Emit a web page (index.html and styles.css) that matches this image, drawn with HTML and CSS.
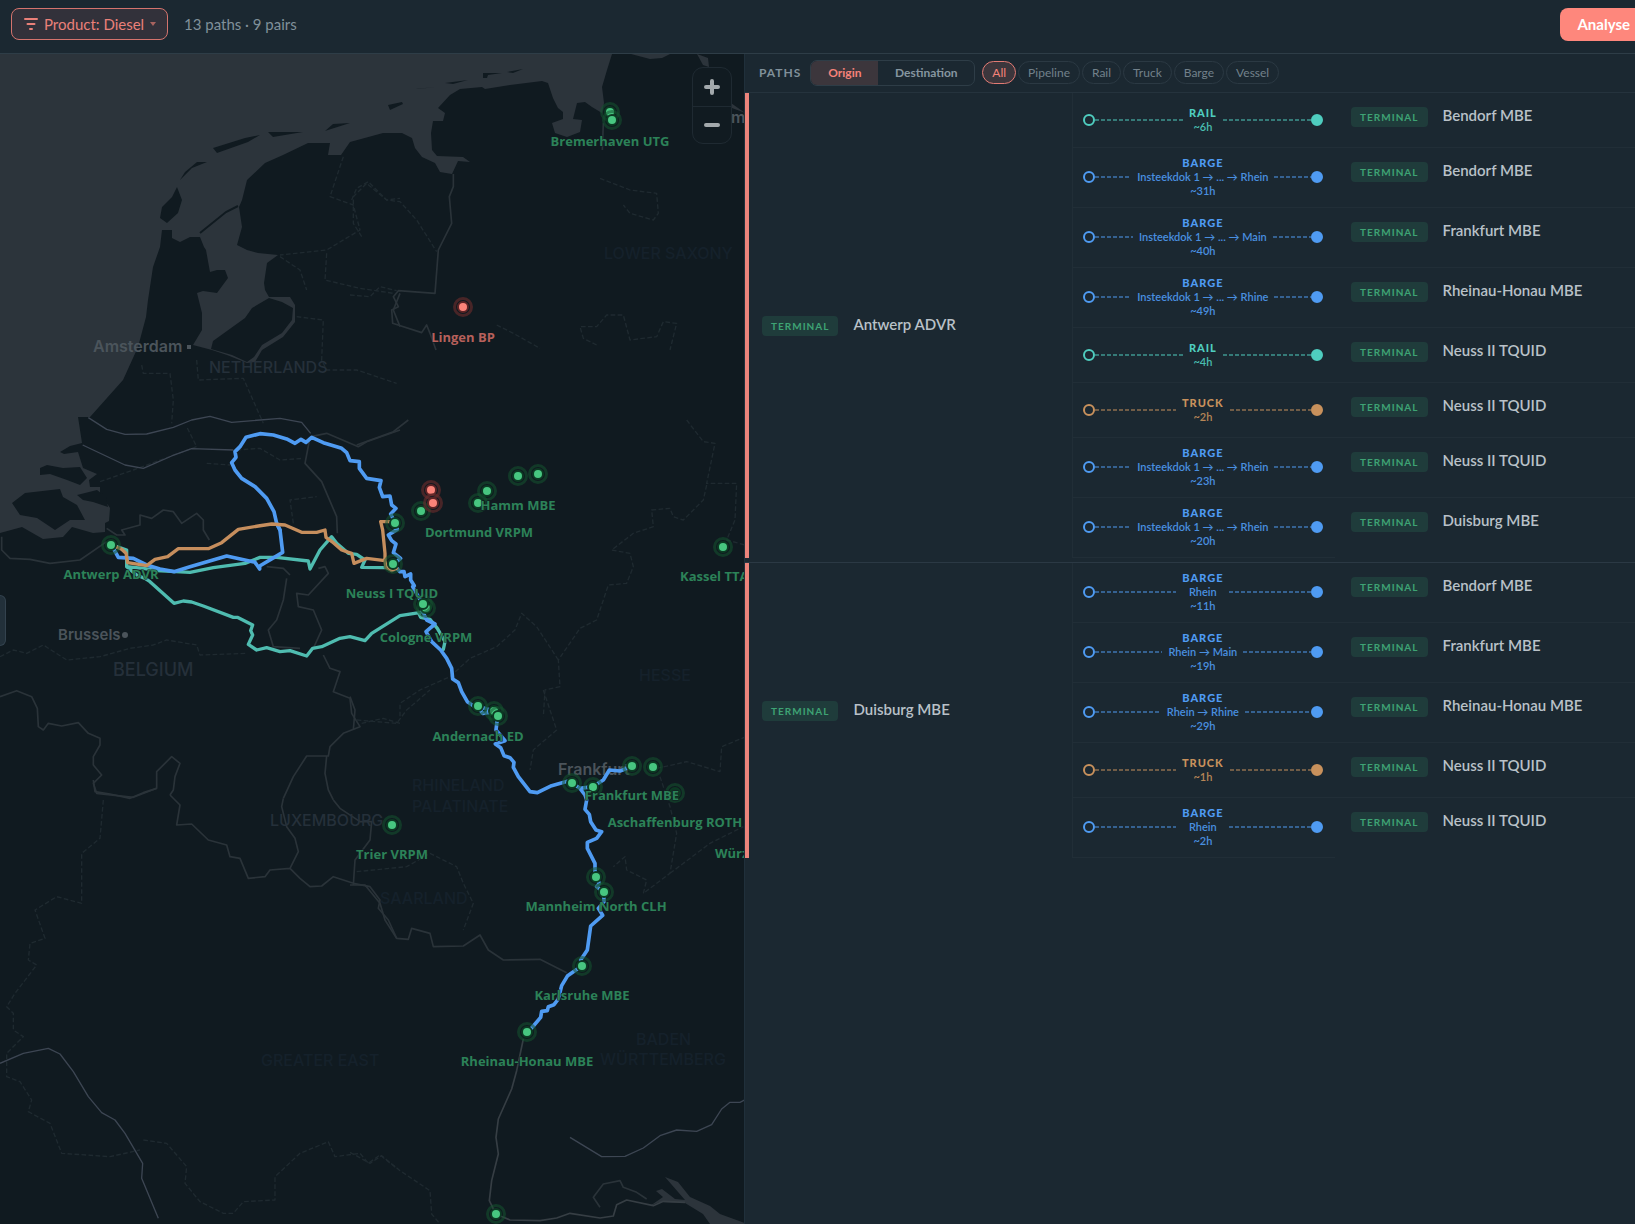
FILE: index.html
```html
<!DOCTYPE html>
<html lang="en">
<head>
<meta charset="utf-8">
<title>Paths</title>
<link rel="stylesheet" href="styles.css">
</head>
<body>
<header class="topbar">
  <button class="filter" type="button">
    <svg width="14" height="14" viewBox="0 0 14 14" fill="none" stroke="currentColor" stroke-width="2" stroke-linecap="round"><path d="M1 2h12M3.500 7h7M6 12h2"/></svg>
    <span>Product: Diesel</span>
    <svg class="caret" width="6" height="4" viewBox="0 0 6 4" fill="currentColor"><path d="M0 0h6L3 4z"/></svg>
  </button>
  <span class="summary">13 paths · 9 pairs</span>
  <button class="analyse" type="button">Analyse</button>
</header>
<main class="workspace">
  <section class="map" aria-label="Map">
    <svg class="map-canvas" viewBox="0 54 745 1170" preserveAspectRatio="xMinYMin slice">
      <g class="water">
        <path d="M0 54H612L607 70 602 87 604 103 602 113 592 107 585 102 577 103 573 119 582 120 580 132 567 137 555 133 552 123 563 119 563 112 558 108 553 98 548 83 542 81 510 85 485 89 482 87 460 89 450 95 438 108 445 113 443 121 433 121 431 133 432 150 437 156 463 157 470 162 458 161 452 174 440 172 435 163 422 157 415 148 412 138 402 133 383 133 350 142 341 155 328 155 330 143 308 143 283 155 265 163 247 180 242 200 239 207 242 227 237 245 247 250 258 253 278 255 267 263 264 283 265 290 269 297 290 297 295 305 295 322 283 337 262 350 255 362 247 363 227 355 212 350 193 345 202 330 202 313 197 293 203 291 217 293 228 278 225 270 217 270 210 272 206 250 204 247 200 237 190 237 180 242 172 238 172 230 162 230 160 247 153 267 148 300 146 317 138 347 123 380 90 417 78 417 82 443 70 446 60 452 64 454 78 452 83 468 97 474 89 480 90 487 100 487 100 493 110 508 109 521 105 523 105 532 93 533 72 527 63 537 43 539 22 527 0 533Z"/>
        <path d="M631 54 650 59 662 58 670 54ZM697 54 708 58 709 67 703 65ZM731 103 745 113 732 108Z"/>
        <path d="M665 1177 678 1182 690 1197 710 1206 720 1214 745 1223V1224H710L703 1214 685 1203 660 1202 650 1206 663 1197 656 1191 662 1189 675 1199 685 1200Z"/>
      </g>
      <g class="land">
        <path d="M269 298 282 302 293 308 292 320 282 333 262 345 254 357 247 362 232 355 211 349 213 341 245 318 252 308Z"/>
        <path d="M177 187 182 200 178 213 167 223 160 218 162 207 172 197ZM180 180 192 168 207 162 197 162 185 172ZM213 148 245 138 260 135 248 142 217 153ZM268 132 303 132 273 137ZM325 131 333 124 350 123 328 130Z"/>
        <path d="M388 105 402 102 403 104 390 110ZM416 89 435 87 418 89ZM445 83 468 80 453 84ZM483 73 502 73 488 75 487 78 483 78ZM507 72 523 69 513 73Z"/>
        <path d="M40 468 47 465 63 468 80 467 87 478 80 485 67 480 50 474 40 475ZM12 503 25 493 60 489 63 497 77 505 85 520 70 520 55 530 37 518 20 515ZM77 495 97 490 106 497 108 507 93 502 83 500Z"/>
        <path class="dam" d="M238 206 226 212 200 233"/>
      </g>
      <g class="borders">
        <g transform="translate(0 500) scale(.33333)">
          <path d="M0 590 50 572 95 590 112 625 115 680 130 690 145 670 185 678 235 668 265 700 300 715 300 735 280 770 280 795 305 825 280 850 290 880 400 892 470 865 470 815 515 770 540 790 525 830 520 870 510 885M850 895 880 830 920 768 985 768 990 740 1030 700 1080 680 1055 640 1050 595 1000 575 1020 515 990 505 970 465M5 110 5 150 30 175 90 178 150 190 240 180 320 125M320 85 350 105 375 105 365 90 420 75 420 45 455 55 490 30 520 35 545 70 590 40 610 60 610 90 628 120M940 445 965 390 940 330 895 320 890 280 925 285 985 220 975 200 955 205M860 235 850 300 830 360 805 390 820 440 900 445M800 200 850 205 870 225M980 768 975 820 985 870 1000 900"/>
          <path class="thin" d="M0 470 40 450 80 460 130 435 200 480 300 470 390 445 460 435 500 420 590 435 600 465 740 460M1085 670 1150 655 1200 670"/>
        </g>
        <g transform="translate(0 780) scale(.33333)">
          <path d="M280 0 285 35 330 42 390 55 430 38 470 25M510 45 540 75 530 135 575 132 625 180 680 195 690 230 720 235 745 295 795 290 810 270 870 265 900 295 930 320 965 318 1000 290 1060 310 1110 320 1140 360 1135 385 1165 420 1190 475M850 55 845 80 860 140 885 175 895 215 870 265M1000 60 1020 85 1080 125 1115 125 1110 180 1065 240 1060 315"/>
          <path class="thin" d="M310 60 300 175 245 220 245 370 170 350 105 390 135 475 90 490 85 540 110 555 45 640 20 680 40 700 40 750 70 770 20 820 20 890 60 905 95 960 85 995 150 1030 185 1120 330 1130 420 1110M430 1080 500 1090 560 1160 555 1210 600 1265 670 1300 700 1300 730 1265 825 1260 825 1190 900 1120 985 1085 1005 1130 1080 1120 1105 1150 1140 1125 1190 1165"/>
          <path class="river" d="M0 850 70 820 145 805 180 822 220 875 265 950 305 998 345 1020 375 1060 428 1150 425 1195 475 1315"/>
        </g>
        <g transform="translate(350 50) scale(.33333)">
          <path d="M310 372 310 410 298 440 305 520 265 600 255 730 145 722 130 740 145 770 125 780 128 820 215 848 230 825 240 850 258 900M757 300 760 220"/>
          <path class="thin" d="M35 560 10 520 10 440 50 400 110 450 150 455 200 510 260 605M750 385 840 420 920 430 925 490 910 510 840 490 820 465M740 885 700 865 690 830 740 830 770 795 820 795 840 870 920 860 940 815 980 820 960 900M0 735 60 740 90 710 140 722M440 825 490 850 570 895"/>
        </g>
        <g transform="scale(.33333)">
          <path class="thin" d="M1030 470 990 590 1060 615 1080 690 980 750 840 765M1055 600 1070 565 1105 545 1160 600 1200 595M980 760 975 840 1080 865 1180 880M840 770 900 810 920 870"/>
        </g>
        <g transform="translate(0 250) scale(.33333)">
          <path d="M1200 130 1180 180 1200 230M932 560 980 550 1075 590 1100 575 1200 540M930 562 915 640 965 695 1010 800 1012 850"/>
          <path class="thin" d="M425 345 430 370 510 370 520 450 515 520M590 330 595 390 730 385 790 520M890 200 970 210 965 330 980 360 1070 360 1190 400M300 695 400 660 590 590 560 530M710 600 780 595 840 630 910 625M880 820 870 750 950 740M620 640 690 645"/>
          <path class="river" d="M265 503 320 538 375 553 440 552 520 532 575 510 630 499 695 517 840 505 905 517 932 550M248 585 375 645 430 655 515 618 575 596 700 600"/>
        </g>
        <g transform="translate(350 420) scale(.33333)">
          <path d="M20 75 130 35 175 0"/>
          <path class="thin" d="M1010 0 1060 65 1095 70 1070 190 1160 190 1155 300 1130 360 1185 375M1070 195 1060 240 1000 300 970 290 960 265 905 270 910 320 850 340 785 390 840 400 850 440 830 490 775 495 740 600 690 625 625 720 630 800 585 810 580 890M625 720 560 620 515 580 495 630 440 680 360 715 300 770 210 810 150 850 150 890"/>
        </g>
        <g transform="translate(350 680) scale(.33333)">
          <path d="M0 50 15 90 10 150M0 615 45 615 90 670 105 720 140 775 175 778 185 745 240 760 250 800 340 798 390 765 415 810 460 840 570 838 650 878"/>
          <path class="thin" d="M20 120 140 130 170 90 240 30M580 30 620 150 550 210 540 270M920 265 1010 245 1110 275 1115 200 1200 165M930 290 960 380 980 460 960 580 880 640 890 600 830 570 825 530 790 560M960 580 1080 490 1180 440M20 575 170 560 240 520 320 560 340 610 370 670 340 750"/>
        </g>
        <g transform="translate(350 924) scale(.33333)">
          <path class="rhine" d="M520 345 500 440 485 495 445 585 438 640 445 690 425 770 418 830 438 871 480 888 570 890 620 882 660 868 750 882 790 876 800 842 830 828 910 845 940 832 1005 835"/>
          <path d="M750 850 730 820 760 780 810 770 820 790 860 805 890 825"/>
          <path class="river" d="M660 640 755 698 825 697 880 672 930 635 980 618 1040 622 1085 602 1115 555 1140 535 1170 535 1185 527"/>
          <path class="thin" d="M0 685 60 718 95 695 150 740 240 800 245 870 270 900"/>
        </g>
      </g>
      <g class="places">
        <g class="city">
          <text x="93" y="352">Amsterdam</text><rect x="187" y="345" width="4" height="4"/>
          <text class="small" x="58" y="640">Brussels</text><circle cx="125" cy="635" r="3"/>
          <text x="558" y="775">Frankfurt</text>
          <text x="731" y="123">m</text>
        </g>
        <g class="country">
          <text x="209" y="373">NETHERLANDS</text>
          <text class="wide" x="113" y="676">BELGIUM</text>
          <text x="270" y="826">LUXEMBOURG</text>
        </g>
        <g class="region">
          <text x="604" y="259">LOWER SAXONY</text>
          <text x="639" y="681">HESSE</text>
          <text x="412" y="791">RHINELAND</text>
          <text x="412" y="812">PALATINATE</text>
          <text x="380" y="904">SAARLAND</text>
          <text x="636" y="1045">BADEN</text>
          <text x="600" y="1065">WÜRTTEMBERG</text>
          <text x="261" y="1066">GREATER EAST</text>
        </g>
      </g>
      <g class="routes">
        <g class="rail">
          <path transform="translate(0 500) scale(.33333)" d="M334 134 380 150 380 200 410 225 435 235 450 245 522 310 550 303 575 306 610 318 700 352 712 352 758 375 752 392 758 405 745 433 770 450 800 443 840 455 870 452 920 468 938 445 965 440 1020 415 1050 410 1095 422 1115 400 1200 347 1263 337M380 200 430 205 470 212 570 217 640 203 735 190 780 172 830 172 925 183 930 207 960 150 995 110 1010 130 1045 160 1070 163 1095 180 1085 202 1160 203 1180 195"/>
          <path transform="translate(350 420) scale(.33333)" d="M205 577 212 592 240 598 262 625 285 665 280 688"/>
        </g>
        <g class="barge">
          <path transform="translate(0 500) scale(.33333)" d="M334 134 355 172 400 175 440 195 480 207 522 215 570 200 680 168 765 187 779 207 779 198 848 157 840 90 830 70"/>
          <path transform="translate(0 250) scale(.33333)" d="M840 840 830 820 822 785 800 745 765 710 725 685 705 660 695 638 708 622 705 605 720 590 738 562 780 551 820 555 860 567 885 580 903 568 918 577 935 562 970 578 1025 595 1040 608 1050 632 1078 635 1078 655 1100 685 1143 692 1138 712 1148 740 1170 738 1175 765 1188 775 1172 792 1185 818"/>
          <path transform="translate(350 420) scale(.33333)" d="M135 310 142 328 115 345 125 362 138 372 130 398 152 415 130 433 150 455 162 455 165 470 182 462 182 480 193 497 188 500 205 530 218 552 218 575 230 600 255 612 228 635 245 665 272 690 290 715 305 745 308 777 325 788 335 815 352 845 370 857 383 859 398 880 415 878 431 873 443 889"/>
          <path transform="translate(350 680) scale(.33333)" d="M443 109 438 150 465 182 436 192 452 203 462 227 480 233 492 247 490 262 505 290 540 335 562 338 605 317 655 303 666 309 690 325 705 345 710 360 705 388 718 403 722 425 738 450 755 455 740 475 712 487 712 505 735 550 735 575 739 592 748 610 740 620 761 637 762 665 745 685 758 706 722 738 712 810 692 840 695 858M690 325 728 320 760 300 778 270 810 273 846 259M383 79 431 93"/>
          <path transform="translate(350 924) scale(.33333)" d="M695 126 653 155 635 185 625 225 612 242 595 248 592 260 575 262 572 280 545 312 532 325"/>
        </g>
        <g class="truck">
          <path transform="translate(0 500) scale(.33333)" d="M334 134 365 148 378 160 383 188 440 197 465 178 503 170 535 146 625 146 665 128 715 88 775 78 815 72 855 75 905 97 950 97 975 90 978 112 1000 128 1025 150 1055 160 1062 190 1100 175 1155 182 1155 160 1148 90 1142 65 1185 65M1155 182 1158 202 1175 212 1190 205"/>
        </g>
      </g>
      <g class="sites">
        <circle cx="610" cy="112" r="4"/><circle cx="612" cy="120" r="4"/><circle cx="518" cy="476" r="4"/><circle cx="538" cy="474" r="4"/><circle cx="487" cy="491" r="4"/><circle cx="478" cy="503" r="4"/><circle cx="421" cy="511" r="4"/><circle cx="395" cy="523" r="4"/><circle cx="393" cy="564" r="4"/><circle cx="426" cy="608" r="4"/><circle cx="423" cy="604" r="4"/><circle cx="723" cy="547" r="4"/><circle cx="478" cy="706" r="4"/><circle cx="494" cy="711" r="4"/><circle cx="498" cy="716" r="4"/><circle cx="632" cy="766" r="4"/><circle cx="653" cy="767" r="4"/><circle cx="572" cy="783" r="4"/><circle cx="593" cy="787" r="4"/><circle class="dim" cx="675" cy="793" r="4"/><circle cx="392" cy="825" r="4"/><circle cx="596" cy="877" r="4"/><circle cx="604" cy="892" r="4"/><circle cx="582" cy="966" r="4"/><circle cx="527" cy="1032" r="4"/><circle cx="496" cy="1214" r="4"/><circle cx="111" cy="545" r="4"/>
        <g class="refinery"><circle cx="463" cy="307" r="4"/><circle cx="431" cy="490" r="4"/><circle cx="433" cy="503" r="4"/></g>
      </g>
      <g class="site-labels">
        <text x="610" y="146">Bremerhaven UTG</text>
        <text class="refinery" x="463" y="342">Lingen BP</text>
        <text x="518" y="510">Hamm MBE</text>
        <text x="479" y="537">Dortmund VRPM</text>
        <text x="392" y="598">Neuss I TQUID</text>
        <text x="426" y="642">Cologne VRPM</text>
        <text x="111" y="579">Antwerp ADVR</text>
        <text x="478" y="741">Andernach ED</text>
        <text x="632" y="800">Frankfurt MBE</text>
        <text x="675" y="827">Aschaffenburg ROTH</text>
        <text x="392" y="859">Trier VRPM</text>
        <text x="596" y="911">Mannheim North CLH</text>
        <text x="582" y="1000">Karlsruhe MBE</text>
        <text x="527" y="1066">Rheinau-Honau MBE</text>
        <text class="from-start" x="680" y="581">Kassel TTA</text>
        <text class="from-start" x="715" y="858">Würz</text>
      </g>
    </svg>
    <div class="zoom">
      <button type="button" aria-label="Zoom in"><svg width="16" height="16" viewBox="0 0 16 16"><path d="M8 2v12M2 8h12"/></svg></button>
      <button type="button" aria-label="Zoom out"><svg width="16" height="16" viewBox="0 0 16 16"><path d="M2 8h12"/></svg></button>
    </div>
    <button class="drawer" type="button" aria-label="Open drawer"></button>
  </section>
  <section class="panel">
    <div class="toolbar">
      <h2>PATHS</h2>
      <div class="segment">
        <button class="on" type="button">Origin</button><button type="button">Destination</button>
      </div>
      <div class="modes">
        <button class="on" type="button">All</button><button type="button">Pipeline</button><button type="button">Rail</button><button type="button">Truck</button><button type="button">Barge</button><button type="button">Vessel</button>
      </div>
    </div>
    <table class="paths">
      <colgroup><col class="col-origin"><col class="col-leg"><col></colgroup>
      <tbody>
        <tr><th rowspan="8" scope="rowgroup"><div class="site"><span class="tag">TERMINAL</span><span>Antwerp ADVR</span></div></th>
          <td class="leg-cell"><div class="leg rail"><i></i><p><b>RAIL</b><span>~6h</span></p><i></i></div></td><td><div class="site"><span class="tag">TERMINAL</span><span>Bendorf MBE</span></div></td></tr>
        <tr class="tall"><td class="leg-cell"><div class="leg barge"><i></i><p><b>BARGE</b><span>Insteekdok 1 → ... → Rhein</span><span>~31h</span></p><i></i></div></td><td><div class="site"><span class="tag">TERMINAL</span><span>Bendorf MBE</span></div></td></tr>
        <tr class="tall"><td class="leg-cell"><div class="leg barge"><i></i><p><b>BARGE</b><span>Insteekdok 1 → ... → Main</span><span>~40h</span></p><i></i></div></td><td><div class="site"><span class="tag">TERMINAL</span><span>Frankfurt MBE</span></div></td></tr>
        <tr class="tall"><td class="leg-cell"><div class="leg barge"><i></i><p><b>BARGE</b><span>Insteekdok 1 → ... → Rhine</span><span>~49h</span></p><i></i></div></td><td><div class="site"><span class="tag">TERMINAL</span><span>Rheinau-Honau MBE</span></div></td></tr>
        <tr><td class="leg-cell"><div class="leg rail"><i></i><p><b>RAIL</b><span>~4h</span></p><i></i></div></td><td><div class="site"><span class="tag">TERMINAL</span><span>Neuss II TQUID</span></div></td></tr>
        <tr><td class="leg-cell"><div class="leg truck"><i></i><p><b>TRUCK</b><span>~2h</span></p><i></i></div></td><td><div class="site"><span class="tag">TERMINAL</span><span>Neuss II TQUID</span></div></td></tr>
        <tr class="tall"><td class="leg-cell"><div class="leg barge"><i></i><p><b>BARGE</b><span>Insteekdok 1 → ... → Rhein</span><span>~23h</span></p><i></i></div></td><td><div class="site"><span class="tag">TERMINAL</span><span>Neuss II TQUID</span></div></td></tr>
        <tr class="tall"><td class="leg-cell"><div class="leg barge"><i></i><p><b>BARGE</b><span>Insteekdok 1 → ... → Rhein</span><span>~20h</span></p><i></i></div></td><td class="last"><div class="site"><span class="tag">TERMINAL</span><span>Duisburg MBE</span></div></td></tr>
      </tbody>
      <tbody>
        <tr class="divider"><td colspan="3"></td></tr>
        <tr class="tall"><th rowspan="5" scope="rowgroup"><div class="site"><span class="tag">TERMINAL</span><span>Duisburg MBE</span></div></th>
          <td class="leg-cell"><div class="leg barge"><i></i><p><b>BARGE</b><span>Rhein</span><span>~11h</span></p><i></i></div></td><td><div class="site"><span class="tag">TERMINAL</span><span>Bendorf MBE</span></div></td></tr>
        <tr class="tall"><td class="leg-cell"><div class="leg barge"><i></i><p><b>BARGE</b><span>Rhein → Main</span><span>~19h</span></p><i></i></div></td><td><div class="site"><span class="tag">TERMINAL</span><span>Frankfurt MBE</span></div></td></tr>
        <tr class="tall"><td class="leg-cell"><div class="leg barge"><i></i><p><b>BARGE</b><span>Rhein → Rhine</span><span>~29h</span></p><i></i></div></td><td><div class="site"><span class="tag">TERMINAL</span><span>Rheinau-Honau MBE</span></div></td></tr>
        <tr><td class="leg-cell"><div class="leg truck"><i></i><p><b>TRUCK</b><span>~1h</span></p><i></i></div></td><td><div class="site"><span class="tag">TERMINAL</span><span>Neuss II TQUID</span></div></td></tr>
        <tr class="tall"><td class="leg-cell"><div class="leg barge"><i></i><p><b>BARGE</b><span>Rhein</span><span>~2h</span></p><i></i></div></td><td class="last"><div class="site"><span class="tag">TERMINAL</span><span>Neuss II TQUID</span></div></td></tr>
      </tbody>
    </table>
  </section>
</main>
</body>
</html>
```
FILE: styles.css
```css
:root {
  --bg: #1b2831;
  --line: #2e3d47;
  --faint: #212e37;
  --coral: #fe877c;
  --muted: #80909a;
  --rail: #4fcdbf;
  --barge: #4f9bf2;
  --truck: #c8915c;
}
*, *::before, *::after { box-sizing: border-box; }
body {
  margin: 0;
  min-height: 100vh;
  display: flex;
  flex-direction: column;
  overflow: hidden;
  background: var(--bg);
  color: #b9c1c8;
  font: 15px/20px Lato, "Open Sans", sans-serif;
}
button { font: inherit; color: inherit; background: none; border: 0; padding: 0; }

.topbar {
  display: flex;
  align-items: center;
  gap: 16px;
  height: 54px;
  padding: 0 0 5px 11px;
  border-bottom: 1px solid var(--line);
  overflow: hidden;
  white-space: nowrap;
}
.filter {
  display: flex;
  align-items: center;
  gap: 6px;
  height: 32px;
  width: 157px;
  padding: 0 11px 0 12px;
  border: 1px solid #d4736d;
  border-radius: 8px;
  background: #32313a;
  color: #ea8079;
}
.filter svg { flex: none; }
.filter .caret { margin-left: auto; color: #a9635f; }
.summary { color: var(--muted); }
.analyse {
  margin-left: auto;
  margin-right: -12px;
  height: 33px;
  padding: 0 17px;
  border-radius: 8px;
  background: var(--coral);
  color: #fff;
  font-weight: 700;
}

.workspace {
  flex: 1;
  display: grid;
  grid-template-columns: minmax(0, 745fr) minmax(0, 890fr);
}
.map { position: relative; overflow: hidden; background: #101a20; border-right: 1px solid #20303b; }
.map-canvas { display: block; width: 100%; height: calc(100vh - 54px); font-family: "Open Sans", "Noto Sans", sans-serif; }
.water { fill: #2c343b; }
.land { fill: #101a20; }
.land .dam { fill: none; stroke: #101a20; stroke-width: 2; }
.borders { fill: none; stroke: #2a3339; stroke-width: 5; stroke-linejoin: round; }
.borders .thin { stroke: #1f2a30; stroke-width: 4; stroke-dasharray: 14 7; }
.borders .river { stroke: #3d4653; stroke-width: 4; }
.borders .rhine { stroke: #363e44; }
.places { font-family: Inter, sans-serif; font-size: 16px; }
.city { fill: #4b545b; font-weight: 600; }
.city .small { font-size: 15px; }
.country { fill: #25303a; font-weight: 500; }
.country .wide { font-size: 18px; }
.region { fill: #15212b; font-weight: 500; }
.routes { fill: none; stroke-width: 10; stroke-linejoin: round; stroke-linecap: round; }
.routes .rail { stroke: #4fbcb0; }
.routes .barge { stroke: var(--barge); stroke-width: 11; }
.routes .truck { stroke: #c68e5d; }
.sites { fill: #47c680; stroke: #0c3a23; stroke-width: 4; paint-order: stroke; }
.sites circle { outline: 3px solid rgba(20, 84, 48, .55); outline-offset: 1px; border-radius: 50%; }
.sites .refinery { fill: #fb8379; stroke: #5c2426; }
.sites .refinery circle { outline-color: rgba(110, 45, 45, .6); }
.sites .dim { fill: #123527; }
.site-labels { fill: #2c8258; font-size: 13px; font-weight: 700; text-anchor: middle; stroke: #101a20; stroke-width: 1; paint-order: stroke; }
.site-labels .refinery { fill: #b7605b; }
.site-labels .from-start { text-anchor: start; }

.zoom {
  position: absolute;
  top: 13px;
  right: 12px;
  width: 40px;
  border: 1px solid #1f2a32;
  border-radius: 11px;
  background: #111b21;
}
.zoom button { display: flex; align-items: center; justify-content: center; width: 38px; height: 38px; }
.zoom button + button { height: 37px; border-top: 1px solid #1f2a32; }
.zoom path { stroke: #a3a9ac; stroke-width: 4; stroke-linecap: round; }
.drawer {
  position: absolute;
  left: 0;
  top: 541px;
  width: 6px;
  height: 51px;
  border: 1px solid #33424e;
  border-left: 0;
  border-radius: 0 7px 7px 0;
  background: #22303a;
}

.toolbar {
  display: flex;
  align-items: center;
  height: 39px;
  padding: 0 14px 1px;
  border-bottom: 1px solid #25333d;
  font-size: 12px;
}
.toolbar h2 { margin: 0 9px 0 0; font-size: 12px; font-weight: 700; letter-spacing: 1px; color: var(--muted); }
.segment { display: flex; width: 165px; height: 26px; border: 1px solid var(--line); border-radius: 7px; overflow: hidden; font-weight: 700; letter-spacing: 1px; color: #8696a0; }
.segment button { flex: 1 1 auto; }
.segment .on { flex: 0 0 67px; background: #3c363c; color: #f58279; }
.modes { display: flex; gap: 2px; margin-left: 7px; color: #72818b; }
.modes button { height: 23px; padding: 0 9px; border: 1px solid #2b3943; border-radius: 12px; }
.modes .on { background: #3c363c; border-color: #e27b74; color: #f58279; }

.paths { width: 100%; table-layout: fixed; border-collapse: separate; border-spacing: 0; }
.col-origin { width: 36.700%; }
.col-leg { width: 29.600%; }
.paths th, .paths td { padding: 0; text-align: left; }
.paths th { border-left: 4px solid #ec847b; padding: 0 0 2px 13px; vertical-align: middle; font-weight: inherit; }
.paths td { height: 55px; padding: 12px 0 0 16px; vertical-align: top; border-bottom: 1px solid var(--faint); }
.paths .tall td { height: 60px; }
.paths .last { border-bottom: 0; }
.paths td.leg-cell { padding: 0 12px 1px 10px; vertical-align: middle; border-left: 1px solid var(--faint); }
.paths .divider td { height: 5px; padding: 0; border-bottom: 1px solid #2b3944; }
.site { display: flex; align-items: baseline; gap: 15px; font-weight: 600; }
.tag {
  padding: 0 9px;
  border-radius: 4px;
  background: #1f3c3b;
  color: #3ea374;
  font-size: 10px;
  line-height: 20px;
  font-weight: 700;
  letter-spacing: 1px;
}

.leg { display: flex; align-items: center; }
.leg.rail { color: var(--rail); }
.leg.barge { color: var(--barge); }
.leg.truck { color: var(--truck); }
.leg::before, .leg::after { content: ""; width: 12px; height: 12px; border: 2px solid; border-radius: 50%; }
.leg::after { background: currentColor; }
.leg i { flex: 1; height: 2px; opacity: .5; background: repeating-linear-gradient(90deg, currentColor 0 4px, transparent 4px 6px); }
.leg p { margin: 0; padding: 0 6px; text-align: center; font-size: 11px; line-height: 14px; font-weight: 600; }
.leg b { display: block; letter-spacing: 1px; }
.leg p span { display: block; opacity: .9; }
```
